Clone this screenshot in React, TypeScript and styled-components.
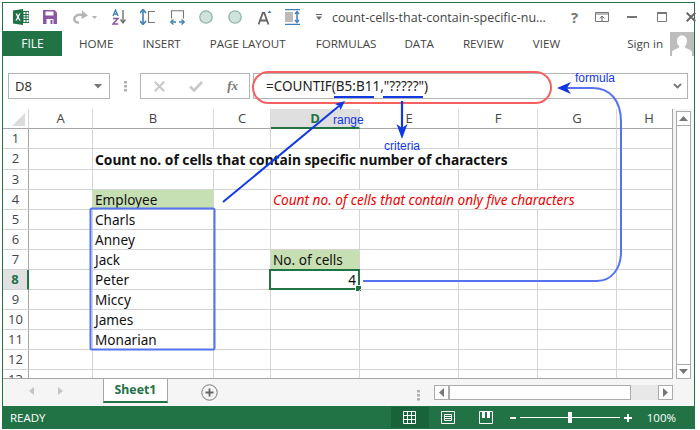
import React from "react";
import styled, { createGlobalStyle } from "styled-components";

const GREEN = "#217346";
const UI = '"Open Sans", "Noto Sans", sans-serif';
const CELL = '"Noto Sans", "Open Sans", sans-serif';
const BLUE = "#1238e6";
const SOFT = "#5573f0";

const Global = createGlobalStyle`
  html, body { margin: 0; padding: 0; background: #fff; }
  #root { width: 700px; height: 430px; overflow: hidden; }
`;

const Root = styled.div`
  position: relative;
  width: 700px;
  height: 430px;
  padding: 2px 0 0 2px;
  box-sizing: border-box;
  background: #fff;
`;
const Frame = styled.div`
  width: 693px;
  height: 427px;
  box-sizing: border-box;
  border: 1px solid ${GREEN};
  border-bottom: none;
  display: flex;
  flex-direction: column;
  background: #fff;
`;
const TitleBar = styled.div`
  height: 28px;
  flex: none;
  display: flex;
  align-items: center;
  padding-left: 10px;
`;
const Icon = styled.svg<{ $gap?: number }>`
  flex: none;
  display: block;
  margin-left: ${(p) => p.$gap ?? 0}px;
`;
const DocTitle = styled.span`
  margin-left: 10px;
  width: 216px;
  flex: none;
  font: 12.5px ${UI};
  color: #444;
  white-space: nowrap;
`;
const Help = styled.span`
  margin-left: 23px;
  width: 9px;
  font: bold 15px ${UI};
  color: #777;
`;
const TabRow = styled.div`
  height: 25px;
  flex: none;
  display: flex;
  align-items: center;
`;
const FileTab = styled.div`
  width: 59px;
  height: 25px;
  background: ${GREEN};
  color: #fff;
  font: 12px/25px ${UI};
  text-align: center;
`;
const Tab = styled.span<{ $left: number }>`
  margin-left: ${(p) => p.$left}px;
  font: 11.6px ${UI};
  color: #444;
  white-space: nowrap;
`;
const SignIn = styled.span`
  margin-left: auto;
  font: 11.6px ${UI};
  color: #444;
  margin-right: 7px;
`;
const Avatar = styled.svg`
  display: block;
  flex: none;
`;
const FormulaRow = styled.div`
  height: 53px;
  flex: none;
  box-sizing: border-box;
  padding: 17px 6px 10px 5px;
  display: flex;
  align-items: stretch;
`;
const BoxBase = styled.div`
  box-sizing: border-box;
  border: 1px solid #b4b4b4;
  background: #fff;
  display: flex;
  align-items: center;
`;
const NameBox = styled(BoxBase)`
  width: 102px;
  flex: none;
  padding: 0 7px 0 6px;
  justify-content: space-between;
  font: 13px ${CELL};
  color: #333;
`;
const Grip = styled.div`
  width: 30px;
  flex: none;
  display: flex;
  align-items: center;
  justify-content: center;
`;
const FxBox = styled(BoxBase)`
  width: 110px;
  flex: none;
  justify-content: space-between;
  padding: 0 11px 0 13px;
`;
const FxLabel = styled.span`
  font: italic bold 13px "Liberation Serif", serif;
  color: #777;
`;
const FormulaBox = styled(BoxBase)`
  flex: 1;
  margin-left: 3px;
  padding: 0 5px 0 12px;
  justify-content: space-between;
`;
const FormulaText = styled.span`
  font: 13.5px ${CELL};
  color: #222;
  white-space: nowrap;
`;
const Middle = styled.div`
  height: 270px;
  flex: none;
  display: flex;
`;
const Sheet = styled.div`
  width: 670px;
  flex: none;
  height: 270px;
  box-sizing: border-box;
  border-right: 1px solid #a6a6a6;
  border-bottom: 1px solid #a6a6a6;
  overflow: hidden;
  display: grid;
  grid-template-columns: 26px 64px 121px 57px 89px 99px 79px 79px 55px;
  grid-template-rows: 20px 20px 21px repeat(11, 20px);
`;
const Corner = styled.div`
  position: relative;
  border-right: 1px solid #d4d4d4;
  border-bottom: 1px solid #a6a6a6;
  &::after {
    content: "";
    position: absolute;
    right: 3px;
    bottom: 2px;
    border-style: solid;
    border-width: 0 0 13px 13px;
    border-color: transparent transparent #dcdcdc transparent;
  }
`;
const ColHead = styled.div<{ $active?: boolean; $end?: boolean }>`
  box-sizing: border-box;
  text-align: center;
  padding-left: ${(p) => (p.$end ? "9px" : "0")};
  font: ${(p) => (p.$active ? "bold 13px" : "13px")}/18px ${UI};
  color: ${(p) => (p.$active ? GREEN : "#444")};
  background: ${(p) => (p.$active ? "#dfdfdf" : "#fff")};
  border-right: ${(p) => (p.$end ? "none" : "1px solid #d9d9d9")};
  border-bottom: ${(p) => (p.$active ? `2px solid ${GREEN}` : "1px solid #a6a6a6")};
`;
const RowHead = styled.div<{ $active?: boolean }>`
  box-sizing: border-box;
  text-align: center;
  font: ${(p) => (p.$active ? "bold 13px" : "13px")}/19px ${UI};
  color: ${(p) => (p.$active ? GREEN : "#444")};
  background: ${(p) => (p.$active ? "#e1e1e1" : "#fff")};
  border-right: ${(p) => (p.$active ? `2px solid ${GREEN}` : "1px solid #a6a6a6")};
  border-bottom: 1px solid #d4d4d4;
`;
const Cell = styled.div<{ $span?: number; $fill?: boolean; $end?: boolean; $tone?: "title" | "note" | "num" }>`
  position: relative;
  box-sizing: border-box;
  grid-column: span ${(p) => p.$span ?? 1};
  padding: 0 3px 0 2px;
  white-space: nowrap;
  text-align: ${(p) => (p.$tone === "num" ? "right" : "left")};
  font: ${(p) => (p.$tone === "title" ? "bold 13.75px/21px" : p.$tone === "note" ? "italic 13.65px/20px" : "13.6px/20px")} ${CELL};
  color: ${(p) => (p.$tone === "note" ? "#f00000" : "#111")};
  background: ${(p) => (p.$fill ? "#c6e0b4" : "transparent")};
  border-right: ${(p) => (p.$end ? "none" : "1px solid #d4d4d4")};
  border-bottom: 1px solid #d4d4d4;
`;
const Selection = styled.div`
  position: absolute;
  inset: -1px -1px -1px -2px;
  border: 2px solid ${GREEN};
  &::after {
    content: "";
    position: absolute;
    right: -3px;
    bottom: -3px;
    width: 5px;
    height: 5px;
    background: ${GREEN};
    outline: 1px solid #fff;
  }
`;
const VScroll = styled.div`
  width: 21px;
  flex: none;
  box-sizing: border-box;
  padding: 2px 3px 0 3px;
  background: #f5f5f5;
  display: flex;
  flex-direction: column;
  height: 270px;
`;
const ScrollBtn = styled.div`
  box-sizing: border-box;
  width: 15px;
  height: 15px;
  flex: none;
  background: #fff;
  border: 1px solid #ababab;
  display: flex;
  align-items: center;
  justify-content: center;
`;
const VTrack = styled.div`
  flex: 1;
  box-sizing: border-box;
  width: 15px;
  background: #fff;
  border-left: 1px solid #ababab;
  border-right: 1px solid #ababab;
`;
const TabsBar = styled.div`
  height: 27px;
  flex: none;
  background: #f5f5f5;
  display: flex;
  align-items: flex-start;
`;
const Nav = styled.div`
  width: 100px;
  height: 24px;
  flex: none;
  box-sizing: border-box;
  padding: 0 0 0 26px;
  display: flex;
  align-items: center;
  gap: 24px;
`;
const SheetTab = styled.div`
  width: 65px;
  height: 24px;
  flex: none;
  box-sizing: border-box;
  background: #fff;
  border: 1px solid #a6a6a6;
  border-top: none;
  border-bottom: 2px solid ${GREEN};
  color: ${GREEN};
  font: bold 12.3px/22px ${CELL};
  text-align: center;
`;
const AddWrap = styled.div`
  margin-left: 33px;
  margin-top: 5px;
  flex: none;
`;
const GripH = styled.div`
  margin: 8px 0 0 199px;
  flex: none;
`;
const HScroll = styled.div`
  margin: 6px 0 0 14px;
  width: 239px;
  height: 15px;
  flex: none;
  display: flex;
`;
const HThumb = styled.div`
  width: 182px;
  box-sizing: border-box;
  background: #fff;
  border: 1px solid #ababab;
`;
const HRest = styled.div`
  flex: 1;
  background: #e8e8e8;
`;
const StatusBar = styled.div`
  height: 23px;
  flex: none;
  background: ${GREEN};
  display: flex;
  align-items: center;
  color: #fff;
  padding-left: 7px;
`;
const Ready = styled.span`
  font: 11.5px ${UI};
`;
const ViewBtn = styled.div<{ $on?: boolean; $first?: boolean }>`
  width: 38px;
  height: 21px;
  flex: none;
  margin-left: ${(p) => (p.$first ? "auto" : "0")};
  background: ${(p) => (p.$on ? "#19633a" : "transparent")};
  display: flex;
  align-items: center;
  justify-content: center;
`;
const Zoom = styled.div`
  display: flex;
  align-items: center;
  margin-left: 5px;
  margin-right: 18px;
`;
const Track = styled.div`
  position: relative;
  width: 100px;
  height: 1px;
  margin: 0 4px;
  background: #fff;
  &::after {
    content: "";
    position: absolute;
    left: 48px;
    top: -5px;
    width: 4px;
    height: 11px;
    background: #fff;
  }
`;
const Percent = styled.span`
  margin-left: 15px;
  font: 11.5px ${UI};
`;
const Overlay = styled.svg`
  position: absolute;
  left: 0;
  top: 0;
  pointer-events: none;
`;
const Callout = styled.span<{ $x: number; $y: number }>`
  position: absolute;
  left: ${(p) => p.$x}px;
  top: ${(p) => p.$y}px;
  font: 12px/14px "Liberation Sans", sans-serif;
  color: ${BLUE};
  white-space: nowrap;
`;

const Caret = () => (
  <svg width="8" height="5" viewBox="0 0 8 5"><path d="M0 0h8L4 4.500z" fill="#777" /></svg>
);

const columns = ["A", "B", "C", "D", "E", "F", "G", "H"];
type Spec = { at: string; text?: string; span?: number; fill?: boolean; tone?: "title" | "note" | "num"; sel?: boolean };
const content: Record<number, Spec[]> = {
  2: [{ at: "B", text: "Count no. of cells that contain specific number of characters", span: 5, tone: "title" }],
  4: [
    { at: "B", text: "Employee", fill: true },
    { at: "D", text: "Count no. of cells that contain only five characters", span: 4, tone: "note" },
  ],
  5: [{ at: "B", text: "Charls" }],
  6: [{ at: "B", text: "Anney" }],
  7: [{ at: "B", text: "Jack" }, { at: "D", text: "No. of cells", fill: true }],
  8: [{ at: "B", text: "Peter" }, { at: "D", text: "4", tone: "num", sel: true }],
  9: [{ at: "B", text: "Miccy" }],
  10: [{ at: "B", text: "James" }],
  11: [{ at: "B", text: "Monarian" }],
};

const rowCells = (row: number) => {
  const specs = content[row] ?? [];
  const out: React.ReactNode[] = [];
  for (let i = 0; i < columns.length; i++) {
    const c = columns[i];
    const s = specs.find((x) => x.at === c);
    const span = s?.span ?? 1;
    out.push(
      <Cell key={c} $span={span} $fill={s?.fill} $tone={s?.tone} $end={c === "H"}>
        {s?.text}
        {s?.sel && <Selection />}
      </Cell>
    );
    i += span - 1;
  }
  return out;
};

export default function App() {
  const rows = Array.from({ length: 13 }, (_, i) => i + 1);
  return (
    <Root>
      <Global />
      <Frame>
        <TitleBar>
          <Icon width="16" height="16" viewBox="0 0 16 16">
            <path d="M0 1.500 10 0v16L0 14.500z" fill="#1e7145" />
            <path d="M10 2.500h6v11h-6z" fill="#fff" stroke="#1e7145" />
            <path d="M10 5.500h6M10 8h6M10 10.500h6M13 2.500v11" stroke="#1e7145" />
            <path d="M2.500 4.500 4 4.500 5 6.800 6.100 4.400 7.600 4.300 5.800 8 7.700 11.700 6.100 11.600 5 9.200 3.900 11.500 2.400 11.400 4.200 8z" fill="#fff" />
          </Icon>
          <Icon $gap={14} width="14" height="14" viewBox="0 0 14 14">
            <path d="M0 0h11.500L14 2.500V14H0z" fill="#8a57a6" />
            <path d="M2.500 1.500h8v4h-8z" fill="#fff" />
            <path d="M3.500 9h7v5h-7z" fill="#fff" />
            <path d="M7.500 10h2v4h-2z" fill="#8a57a6" />
          </Icon>
          <Icon $gap={15} width="16" height="14" viewBox="0 0 16 14">
            <path d="M7 12.500C2 13 1 8 4 6c2-1.500 5-1.500 8-.5" fill="none" stroke="#b5b5b5" strokeWidth="2.400" />
            <path d="M10 0.500 16 5.500 9.500 9z" fill="#b5b5b5" />
          </Icon>
          <Icon $gap={4} width="5" height="3" viewBox="0 0 5 3"><path d="M0 0h5L2.500 3z" fill="#b0b0b0" /></Icon>
          <Icon $gap={15} width="15" height="16" viewBox="0 0 15 16">
            <path d="M1 7 3.500 1 6 7M1.800 5h3.400" fill="none" stroke="#3c7fb8" strokeWidth="1.300" />
            <path d="M1 9.500h5L1 15h5.300" fill="none" stroke="#8a57a6" strokeWidth="1.500" />
            <path d="M11 1v12.500" stroke="#666" strokeWidth="1.300" />
            <path d="M8.500 10.500 11 14l2.500-3.500" fill="none" stroke="#666" strokeWidth="1.300" />
          </Icon>
          <Icon $gap={13} width="15" height="16" viewBox="0 0 15 16">
            <path d="M3 2v12" stroke="#3c7fb8" strokeWidth="1.600" />
            <path d="M0 4 3 .5 6 4M0 12l3 3.500L6 12" fill="none" stroke="#3c7fb8" strokeWidth="1.600" />
            <path d="M15 2.500H8.500v11H15" fill="none" stroke="#777" strokeWidth="1.200" />
          </Icon>
          <Icon $gap={15} width="15" height="15" viewBox="0 0 15 15">
            <path d="M1.500 8.500V.7h12v7.800" fill="none" stroke="#777" strokeWidth="1.100" />
            <path d="M1 12h5M9 12h5" stroke="#3c7fb8" strokeWidth="1.300" />
            <path d="M3.500 9.500 .8 12l2.700 2.500M11.500 9.500 14.200 12l-2.700 2.500" fill="none" stroke="#3c7fb8" strokeWidth="1.300" />
          </Icon>
          <Icon $gap={14} width="14" height="14" viewBox="0 0 14 14">
            <circle cx="7" cy="7" r="6.200" fill="#cfe2dc" stroke="#8db7a9" strokeWidth="1.300" />
          </Icon>
          <Icon $gap={15} width="14" height="14" viewBox="0 0 14 14">
            <circle cx="7" cy="7" r="6.200" fill="#cfe2dc" stroke="#8db7a9" strokeWidth="1.300" />
          </Icon>
          <Icon $gap={16} width="14" height="15" viewBox="0 0 14 15">
            <path d="M.5 14.500 4.700 3h1.600l4.200 11.500M2.300 10.500h6.400" fill="none" stroke="#666" strokeWidth="1.800" />
            <path d="M9.500 3 11.500 .5 13.500 3z" fill="#3c7fb8" />
          </Icon>
          <Icon $gap={13} width="15" height="16" viewBox="0 0 15 16">
            <path d="M0 .7h15M0 15.300h15" stroke="#3c7fb8" strokeWidth="1.200" />
            <path d="M1 3v10M3 3v10M5 3v10M7 3v10" stroke="#777" />
            <path d="M12 3v10" stroke="#3c7fb8" strokeWidth="1.500" />
            <path d="M10 5 12 2.500 14 5M10 11l2 2.500L14 11" fill="none" stroke="#3c7fb8" strokeWidth="1.400" />
          </Icon>
          <Icon $gap={16} width="6" height="6" viewBox="0 0 6 6">
            <path d="M0 .5h6" stroke="#666" />
            <path d="M0 2.500h6L3 6z" fill="#666" />
          </Icon>
          <DocTitle>count-cells-that-contain-specific-nu...</DocTitle>
          <Help>?</Help>
          <Icon $gap={17} width="14" height="10" viewBox="0 0 14 10">
            <path d="M.5.500h13v9H.5z" fill="none" stroke="#777" />
            <path d="M.5 2h13" stroke="#777" />
            <path d="M7 9V4.500M4.800 6.500 7 4l2.200 2.500" fill="none" stroke="#666" />
          </Icon>
          <Icon $gap={18} width="10" height="2" viewBox="0 0 10 2"><path d="M0 0h10v2H0z" fill="#777" /></Icon>
          <Icon $gap={20} width="10" height="10" viewBox="0 0 10 10">
            <path d="M.5.500h9v9h-9z" fill="none" stroke="#777" />
            <path d="M0 0h10v2H0z" fill="#777" />
          </Icon>
          <Icon $gap={19} width="10" height="10" viewBox="0 0 10 10">
            <path d="M.7.700l8.600 8.600M9.300.700.700 9.300" stroke="#666" strokeWidth="2" />
          </Icon>
        </TitleBar>
        <TabRow>
          <FileTab>FILE</FileTab>
          <Tab $left={17}>HOME</Tab>
          <Tab $left={29}>INSERT</Tab>
          <Tab $left={29}>PAGE LAYOUT</Tab>
          <Tab $left={30}>FORMULAS</Tab>
          <Tab $left={28}>DATA</Tab>
          <Tab $left={29}>REVIEW</Tab>
          <Tab $left={29}>VIEW</Tab>
          <SignIn>Sign in</SignIn>
          <Avatar width="24" height="24" viewBox="0 0 24 24">
            <path d="M0 0h24v24H0z" fill="#bdbdbd" />
            <path d="M12 3.500c3.300 0 5 2.600 5 5.600 0 2.400-1 4.300-2.400 5.300 0 1.200 1.500 1.800 4 2.800 1.700.7 3 1.400 3.400 2.800V24H2v-4c.4-1.400 1.700-2.100 3.400-2.800 2.500-1 4-1.600 4-2.800C8 13.400 7 11.500 7 9.100c0-3 1.700-5.600 5-5.600z" fill="#fff" />
          </Avatar>
        </TabRow>
        <FormulaRow>
          <NameBox>
            D8
            <Caret />
          </NameBox>
          <Grip>
            <svg width="3" height="11" viewBox="0 0 3 11"><path d="M0 0h3v2.500H0zM0 4h3v2.500H0zM0 8h3v2.500H0z" fill="#b0b0b0" /></svg>
          </Grip>
          <FxBox>
            <svg width="11" height="11" viewBox="0 0 11 11"><path d="M.7.700l9.600 9.600M10.300.700.700 10.300" stroke="#c8c8c8" strokeWidth="2" /></svg>
            <svg width="14" height="11" viewBox="0 0 14 11"><path d="M1 5.500 5 9.500 13 1" fill="none" stroke="#c8c8c8" strokeWidth="2.600" /></svg>
            <FxLabel>fx</FxLabel>
          </FxBox>
          <FormulaBox>
            <FormulaText>=COUNTIF(B5:B11,"?????")</FormulaText>
            <svg width="9" height="6" viewBox="0 0 9 6"><path d="M1 1l3.500 3.500L8 1" fill="none" stroke="#777" strokeWidth="1.800" /></svg>
          </FormulaBox>
        </FormulaRow>
        <Middle>
          <Sheet>
            <Corner />
            {columns.map((c) => (
              <ColHead key={c} $active={c === "D"} $end={c === "H"}>{c}</ColHead>
            ))}
            {rows.map((r) => (
              <React.Fragment key={r}>
                <RowHead $active={r === 8}>{r}</RowHead>
                {rowCells(r)}
              </React.Fragment>
            ))}
          </Sheet>
          <VScroll>
            <ScrollBtn>
              <svg width="9" height="5" viewBox="0 0 9 5"><path d="M4.500 0 9 5H0z" fill="#777" /></svg>
            </ScrollBtn>
            <VTrack />
            <ScrollBtn>
              <svg width="9" height="5" viewBox="0 0 9 5"><path d="M0 0h9L4.500 5z" fill="#777" /></svg>
            </ScrollBtn>
          </VScroll>
        </Middle>
        <TabsBar>
          <Nav>
            <svg width="5" height="8" viewBox="0 0 5 8"><path d="M5 0v8L0 4z" fill="#c4c4c4" /></svg>
            <svg width="5" height="8" viewBox="0 0 5 8"><path d="M0 0v8l5-4z" fill="#c4c4c4" /></svg>
          </Nav>
          <SheetTab>Sheet1</SheetTab>
          <AddWrap>
            <svg width="17" height="17" viewBox="0 0 17 17">
              <circle cx="8.500" cy="8.500" r="7.700" fill="none" stroke="#777" />
              <path d="M4.500 8.500h8M8.500 4.500v8" stroke="#666" strokeWidth="1.800" />
            </svg>
          </AddWrap>
          <GripH>
            <svg width="3" height="11" viewBox="0 0 3 11"><path d="M0 0h3v2.500H0zM0 4h3v2.500H0zM0 8h3v2.500H0z" fill="#b0b0b0" /></svg>
          </GripH>
          <HScroll>
            <ScrollBtn>
              <svg width="5" height="9" viewBox="0 0 5 9"><path d="M5 0v9L0 4.500z" fill="#777" /></svg>
            </ScrollBtn>
            <HThumb />
            <HRest />
            <ScrollBtn>
              <svg width="5" height="9" viewBox="0 0 5 9"><path d="M0 0v9l5-4.500z" fill="#777" /></svg>
            </ScrollBtn>
          </HScroll>
        </TabsBar>
        <StatusBar>
          <Ready>READY</Ready>
          <ViewBtn $first $on>
            <svg width="13" height="13" viewBox="0 0 13 13"><path d="M.5.500h12v12H.5zM4.500.500v12M8.500.500v12M.5 4.500h12M.5 8.500h12" fill="none" stroke="#fff" /></svg>
          </ViewBtn>
          <ViewBtn>
            <svg width="14" height="13" viewBox="0 0 14 13"><path d="M.5.500h13v12H.5z" fill="none" stroke="#fff" /><path d="M3.500 3.500h7v6h-7zM3.500 5.500h7M3.500 7.500h7" fill="none" stroke="#fff" /></svg>
          </ViewBtn>
          <ViewBtn>
            <svg width="14" height="13" viewBox="0 0 14 13"><path d="M.5.500h13v12H.5z" fill="none" stroke="#fff" /><path d="M3 0h3v7H3zM8 0h3v7H8z" fill="#fff" /></svg>
          </ViewBtn>
          <Zoom>
            <svg width="6" height="2" viewBox="0 0 6 2"><path d="M0 0h6v2H0z" fill="#fff" /></svg>
            <Track />
            <svg width="8" height="8" viewBox="0 0 8 8"><path d="M3 0h2v3h3v2H5v3H3V5H0V3h3z" fill="#fff" /></svg>
            <Percent>100%</Percent>
          </Zoom>
        </StatusBar>
      </Frame>
      <Overlay width="700" height="430" viewBox="0 0 700 430">
        <rect x="253" y="72" width="298" height="31" rx="15.500" fill="none" stroke="#f66060" strokeWidth="2" />
        <path d="M334 97h40M383 97h40" stroke={BLUE} strokeWidth="2" />
        <path d="M402 101V128" stroke={BLUE} strokeWidth="2.200" />
        <path d="M402 139 396.500 124 402 128 407.500 124z" fill={BLUE} />
        <path d="M223 202 339 106" stroke={BLUE} strokeWidth="2" />
        <path d="M345 101 335 104 339 106 340.500 110z" fill={BLUE} />
        <rect x="90.500" y="208.500" width="124" height="141" rx="1.500" fill="none" stroke={SOFT} strokeWidth="2" />
        <path d="M363 281H597C612 281 621 268 621 252V122C621 100 610 88 592 88H562" fill="none" stroke={SOFT} strokeWidth="2" />
        <path d="M557 88 571 82 567 88 571 94z" fill={BLUE} />
      </Overlay>
      <Callout $x={333} $y={113}>range</Callout>
      <Callout $x={384} $y={139}>criteria</Callout>
      <Callout $x={575} $y={71}>formula</Callout>
    </Root>
  );
}
